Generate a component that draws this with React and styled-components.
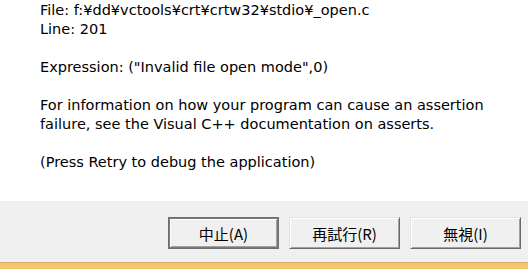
import React from "react";
import styled, { createGlobalStyle } from "styled-components";

const Global = createGlobalStyle`
  html, body { margin: 0; padding: 0; background: #ffffff; }
  body { width: 528px; height: 269px; overflow: hidden; }
`;

const Dialog = styled.div`
  width: 528px;
  height: 269px;
  display: flex;
  flex-direction: column;
  background: #ffffff;
`;

const Content = styled.div`
  height: 201px;
  box-sizing: border-box;
  padding: 1px 0 0 40px;
  font-family: "DejaVu Sans", Verdana, sans-serif;
  font-size: 14.5px;
  line-height: 19px;
  color: #000000;
`;

const Line = styled.div`
  white-space: pre;
  min-height: 19px;
`;

const Footer = styled.div`
  height: 61px;
  box-sizing: border-box;
  background: #f0f0f0;
  display: flex;
  justify-content: flex-end;
  align-items: flex-start;
  gap: 10px;
  padding: 16px 7px 0 0;
`;

const Button = styled.button`
  width: 111px;
  height: 32px;
  box-sizing: border-box;
  margin: 0;
  padding: 0;
  background: #f0f0f0;
  font-family: "Noto Sans CJK JP", "DejaVu Sans", sans-serif;
  font-size: 15px;
  color: #000000;
  border: 1px solid;
  border-color: ${(p) => (p.$default ? "#6e6e6e" : "#e3e3e3 #696969 #696969 #e3e3e3")};
  box-shadow: ${(p) =>
    p.$default
      ? "inset 1px 1px 0 #7a7a7a, inset -1px -1px 0 #7a7a7a, inset 2px 2px 0 #ffffff, inset -2px -2px 0 #a0a0a0"
      : "inset 1px 1px 0 #ffffff, inset -1px -1px 0 #a0a0a0"};
  display: flex;
  align-items: center;
  justify-content: center;
  line-height: 1;
`;

const Taskbar = styled.div`
  height: 7px;
  background: #f4c76c;
  border-top: 1px solid #d6b06a;
  box-sizing: border-box;
`;

export default function App() {
  const lines = [
    "File: f:¥dd¥vctools¥crt¥crtw32¥stdio¥_open.c",
    "Line: 201",
    "",
    "Expression: (\"Invalid file open mode\",0)",
    "",
    "For information on how your program can cause an assertion",
    "failure, see the Visual C++ documentation on asserts.",
    "",
    "(Press Retry to debug the application)",
  ];
  return (
    <>
      <Global />
      <Dialog>
        <Content>
          {lines.map((l, i) => (
            <Line key={i}>{l}</Line>
          ))}
        </Content>
        <Footer>
          <Button $default>中止(A)</Button>
          <Button>再試行(R)</Button>
          <Button>無視(I)</Button>
        </Footer>
        <Taskbar />
      </Dialog>
    </>
  );
}
